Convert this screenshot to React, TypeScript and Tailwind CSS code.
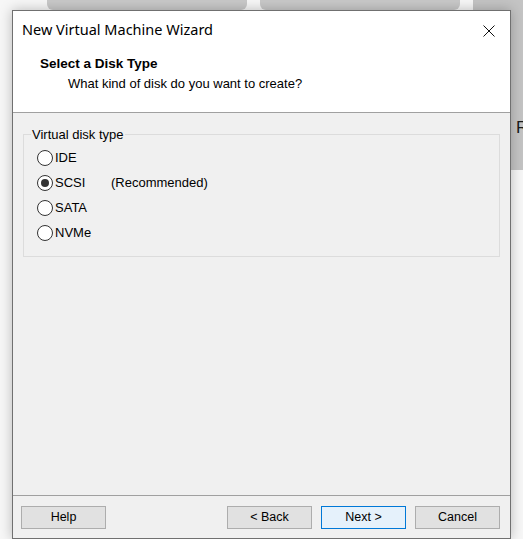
import React from "react";

function Radio({ checked, label, extra }: { checked?: boolean; label: string; extra?: string }) {
  return (
    <div className="flex items-center h-[25px]">
      <div className="w-[16px] h-[16px] rounded-full border border-[#333333] bg-white flex items-center justify-center">
        {checked && <div className="w-[8px] h-[8px] rounded-full bg-[#333333]" />}
      </div>
      <span className="ml-[2px] w-[56px]">{label}</span>
      {extra && <span>{extra}</span>}
    </div>
  );
}

function Btn({ children, primary }: { children: React.ReactNode; primary?: boolean }) {
  return (
    <div
      className={
        "w-[85px] h-[23px] flex items-center justify-center border " +
        (primary ? "bg-[#e5f1fb] border-[#0078d7]" : "bg-[#e1e1e1] border-[#adadad]")
      }
    >
      {children}
    </div>
  );
}

export default function App() {
  return (
    <div
      className="relative w-[523px] h-[539px] bg-[#f7f7f7] overflow-hidden text-black"
      style={{ fontFamily: '"Liberation Sans", Arial, sans-serif' }}
    >
      {/* background windows on desktop */}
      <div className="absolute left-[47px] top-[-20px] w-[200px] h-[30px] rounded-b-[6px] bg-[#c9c9c9]" />
      <div className="absolute left-[260px] top-[-20px] w-[200px] h-[30px] rounded-b-[6px] bg-[#c9c9c9]" />
      <div className="absolute left-[473px] top-[-20px] w-[80px] h-[190px] bg-[#c4c4c4]" />
      <div className="absolute left-[516px] top-[119px] text-[17px] text-[#1a1a1a] leading-none">R</div>

      {/* dialog */}
      <div className="absolute left-[12px] top-[10px] w-[499px] h-[529px] border border-[#707070] bg-[#f0f0f0] flex flex-col shadow-[0_0_12px_rgba(0,0,0,0.25)]">
        <div className="h-[101px] bg-white flex flex-col">
          <div className="flex items-center justify-between pl-[9px] pr-[15px] pt-[4px] h-[34px]">
            <span className="text-[14.5px]" style={{ fontFamily: '"Noto Sans", sans-serif' }}>
              New Virtual Machine Wizard
            </span>
            <svg width="12" height="12" viewBox="0 0 12 12" className="mt-[2px]">
              <path d="M0.5 0.5 L11.5 11.5 M11.5 0.5 L0.5 11.5" stroke="#111" strokeWidth="1" />
            </svg>
          </div>
          <div className="pl-[27px] pt-[11px] text-[13.5px] font-bold leading-[15px]">Select a Disk Type</div>
          <div className="pl-[55px] pt-[5px] text-[13px] leading-[15px]">What kind of disk do you want to create?</div>
        </div>
        <div className="h-px bg-[#a0a0a0]" />
        <div className="flex-1 px-[10px] pt-[14px] text-[13px]">
          <fieldset className="border border-[#dcdcdc] w-[477px] h-[130px] p-0">
            <legend className="ml-[7px] px-[1px] leading-[15px]">Virtual disk type</legend>
            <div className="pl-[13px] pt-[3px]">
              <Radio label="IDE" />
              <Radio label="SCSI" checked extra="(Recommended)" />
              <Radio label="SATA" />
              <Radio label="NVMe" />
            </div>
          </fieldset>
        </div>
        <div className="h-px bg-[#a0a0a0]" />
        <div className="h-[42px] flex items-start pt-[10px] pl-[8px] pr-[10px] text-[12.5px]">
          <Btn>Help</Btn>
          <div className="flex-1" />
          <div className="flex gap-[9px]">
            <Btn>&lt; Back</Btn>
            <Btn primary>Next &gt;</Btn>
            <Btn>Cancel</Btn>
          </div>
        </div>
      </div>
    </div>
  );
}
